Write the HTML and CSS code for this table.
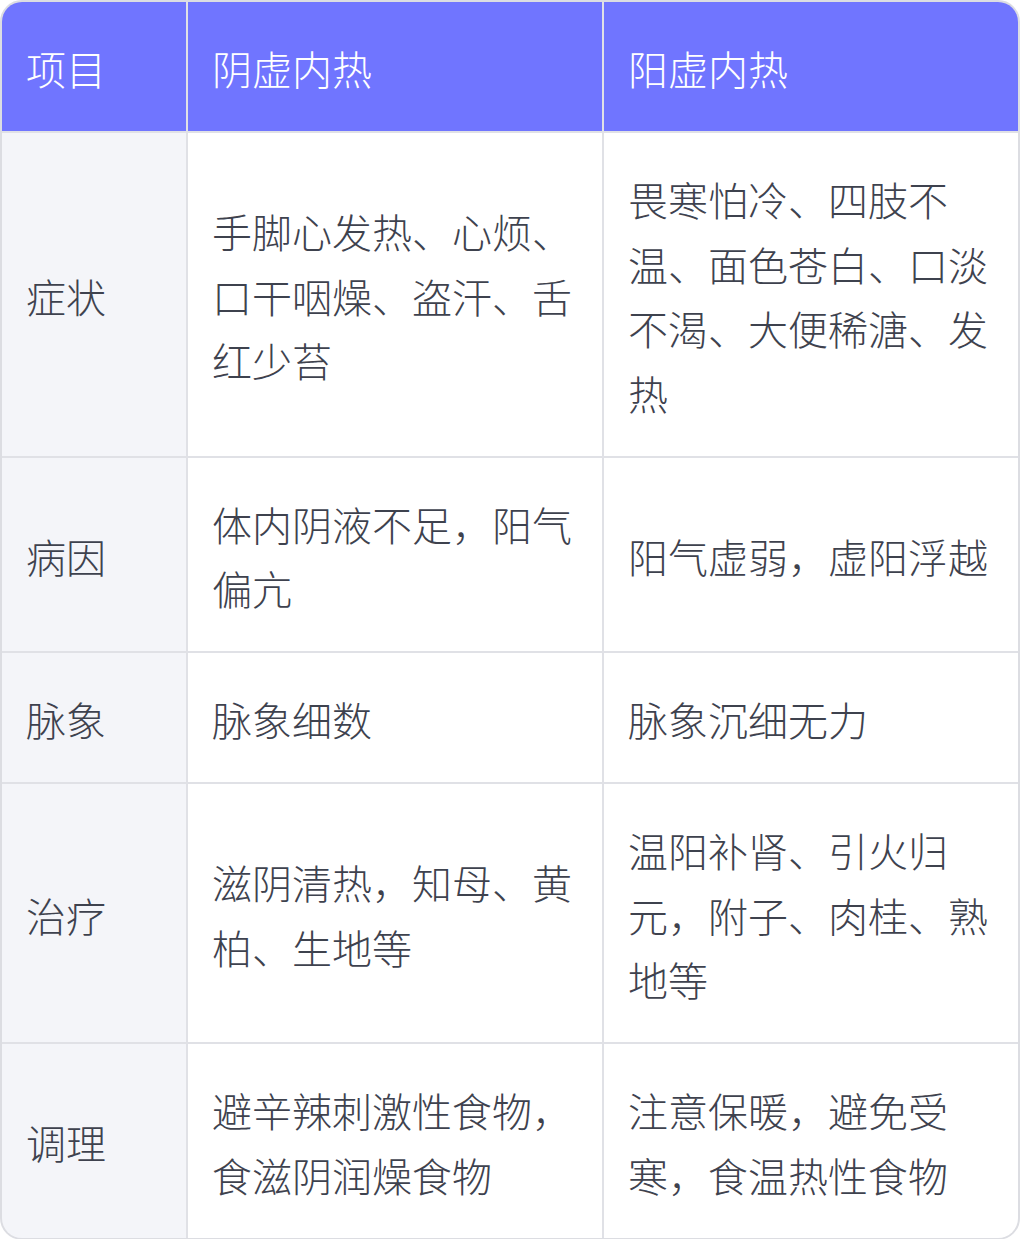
FILE: index.html
```html
<!DOCTYPE html>
<html lang="zh-CN">
<head>
<meta charset="utf-8">
<title>阴虚内热 与 阳虚内热</title>
<link rel="stylesheet" href="styles.css">
</head>
<body>
<div class="table">
  <div class="cell head">项目</div>
  <div class="cell head">阴虚内热</div>
  <div class="cell head">阳虚内热</div>

  <div class="cell label">症状</div>
  <div class="cell">手脚心发热、心烦、口干咽燥、盗汗、舌红少苔</div>
  <div class="cell">畏寒怕冷、四肢不温、面色苍白、口淡不渴、大便稀溏、发热</div>

  <div class="cell label">病因</div>
  <div class="cell">体内阴液不足，阳气偏亢</div>
  <div class="cell">阳气虚弱，虚阳浮越</div>

  <div class="cell label">脉象</div>
  <div class="cell">脉象细数</div>
  <div class="cell">脉象沉细无力</div>

  <div class="cell label">治疗</div>
  <div class="cell">滋阴清热，知母、黄柏、生地等</div>
  <div class="cell">温阳补肾、引火归元，附子、肉桂、熟地等</div>

  <div class="cell label">调理</div>
  <div class="cell">避辛辣刺激性食物，食滋阴润燥食物</div>
  <div class="cell">注意保暖，避免受寒，食温热性食物</div>
</div>
</body>
</html>
```

FILE: styles.css
```css
html, body {
  margin: 0;
  padding: 0;
  background: #ffffff;
}

body {
  font-family: "Noto Sans CJK SC", "Noto Sans", sans-serif;
  font-size: 40px;
  font-weight: 300;
  color: #3e424e;
}

.table {
  display: grid;
  grid-template-columns: 184px 1fr 1fr;
  gap: 2px;
  width: 1020px;
  box-sizing: border-box;
  border: 2px solid #dcdde2;
  border-radius: 22px;
  overflow: hidden;
  background: #e0e1e6;
}

.cell {
  display: flex;
  align-items: center;
  padding: 34px 24px 30.5px;
  line-height: 64.5px;
  background: #ffffff;
  word-break: break-all;
}

.head {
  background: #7075ff;
  color: #ffffff;
}

.label {
  background: #f4f5f9;
}
```
